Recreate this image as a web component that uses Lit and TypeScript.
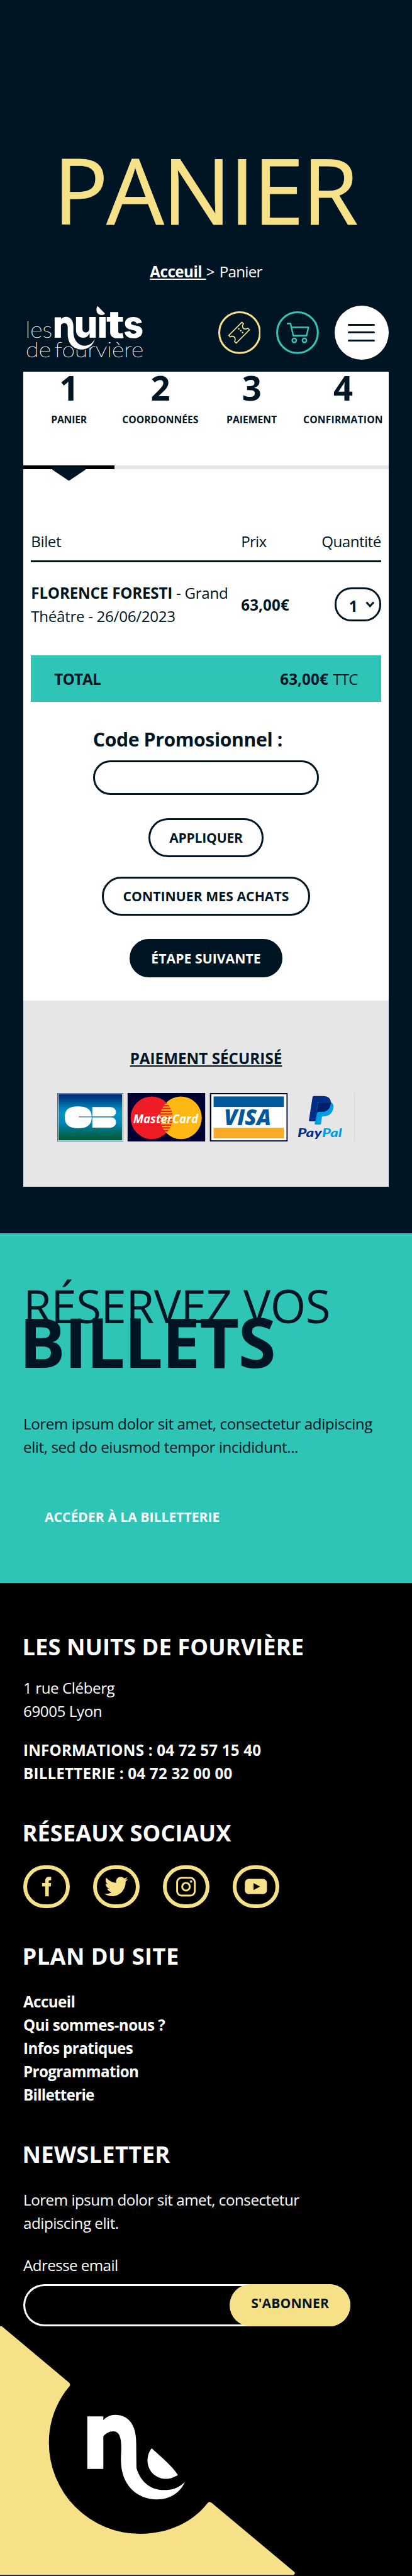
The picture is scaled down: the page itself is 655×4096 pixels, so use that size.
import { LitElement, html, svg, css } from "lit";
import { customElement } from "lit/decorators.js";

const STEPS = [
  { n: "1", label: "PANIER", cls: "s1" },
  { n: "2", label: "COORDONNÉES", cls: "s2" },
  { n: "3", label: "PAIEMENT", cls: "s3" },
  { n: "4", label: "CONFIRMATION", cls: "s4" },
];

const LINKS = [
  { label: "Accueil", cls: "k1" },
  { label: "Qui sommes-nous ?", cls: "k2" },
  { label: "Infos pratiques", cls: "k3" },
  { label: "Programmation", cls: "k4" },
  { label: "Billetterie", cls: "k5" },
];

const SOCIALS = [
  {
    name: "Facebook",
    art: svg`<path d="M45.5 64V43.6H39V36.5H45.5V32.5C45.5 26.500 49 24 53 24H57.700V31H55C53.200 31 52.800 32 52.800 33.500V36.500H57.700L57 43.600H52.800V64Z" fill="#f6e188"/>`,
  },
  {
    name: "Twitter",
    art: svg`<path transform="translate(24 19.200) scale(.094 .096)" fill="#f6e188" d="M459.370 151.716c.325 4.548.325 9.097.325 13.645 0 138.720-105.583 298.558-298.558 298.558-59.452 0-114.680-17.219-161.137-47.106 8.447.974 16.568 1.299 25.340 1.299 49.055 0 94.213-16.568 130.274-44.832-46.132-.975-84.792-31.188-98.112-72.772 6.498.974 12.995 1.624 19.818 1.624 9.421 0 18.843-1.300 27.614-3.573-48.081-9.747-84.143-51.980-84.143-102.985v-1.299c13.969 7.797 30.214 12.670 47.431 13.319-28.264-18.843-46.781-51.005-46.781-87.391 0-19.492 5.197-37.360 14.294-52.954 51.655 63.675 129.300 105.258 216.365 109.807-1.624-7.797-2.599-15.918-2.599-24.040 0-57.828 46.782-104.934 104.934-104.934 30.213 0 57.502 12.670 76.670 33.137 23.715-4.548 46.456-13.320 66.599-25.340-7.798 24.366-24.366 44.833-46.132 57.827 21.117-2.273 41.584-8.122 60.426-16.243-14.292 20.791-32.161 39.308-52.628 54.253z"/>`,
  },
  {
    name: "Instagram",
    art: svg`<g fill="none" stroke="#f6e188"><rect x="29.500" y="26" width="36.500" height="36.500" rx="9" stroke-width="3.800"/><circle cx="47.800" cy="44.200" r="7.800" stroke-width="3.800"/></g><circle cx="58.300" cy="33.500" r="2.500" fill="#f6e188"/>`,
  },
  {
    name: "YouTube",
    art: svg`<rect x="25.200" y="28.200" width="45.500" height="31.500" rx="8" fill="#f6e188"/><path d="M43 37L56.600 44L43 51Z" fill="#000"/>`,
  },
];

const siteLogo = svg`<svg class="logo" viewBox="54 60 756 336" role="img" aria-label="les nuits de fourvière">
  <g fill="#fff">
    <g class="thin">
      <text x="68" y="260" font-size="136" textLength="166" lengthAdjust="spacingAndGlyphs">les</text>
      <text x="70" y="378" font-size="132" textLength="156" lengthAdjust="spacingAndGlyphs">de</text>
      <text x="248" y="378" font-size="132" textLength="550" lengthAdjust="spacingAndGlyphs">fourvière</text>
    </g>
    <path d="M326 255H372C385 320 470 330 496 262C496 300 470 334 413 336C365 336 332 300 326 255Z" fill="#001524"/>
    <path d="M248 132H288V143C296 134 306 129 318 129C345 129 362 150 364 185V225C366 275 395 308 435 308C462 306 483 292 496 266C488 305 455 331 413 331C365 330 330 295 329 240V195C329 180 322 168 309 168C300 168 292 172 287 181V258H248Z"/>
    <path d="M513 62C500 85 506 118 540 118C548 118 556 114 560 110Z"/>
    <g class="fat">
      <text x="367" y="259" font-size="232" textLength="148" lengthAdjust="spacingAndGlyphs">u</text>
      <text x="510" y="259" font-size="232" textLength="67" lengthAdjust="spacingAndGlyphs">ı</text>
      <text x="568" y="259" font-size="232" textLength="112" lengthAdjust="spacingAndGlyphs">t</text>
      <text x="674" y="259" font-size="232" textLength="124" lengthAdjust="spacingAndGlyphs">s</text>
    </g>
  </g>
</svg>`;

const ticketIcon = svg`<svg class="round" viewBox="30 36 264 264">
  <circle cx="162" cy="168" r="126" fill="none" stroke="#f6e188" stroke-width="12"/>
  <path d="M176 104L186 113C175 126 180 146 198 146C206 146 209 140 214 141L223 151L141 233L131 223C140 210 134 191 116 190C110 190 107 194 104 195L95 185Z" fill="none" stroke="#f6e188" stroke-width="6.500"/>
  <g fill="#f6e188"><circle cx="157" cy="145" r="5"/><circle cx="169" cy="156" r="5"/><circle cx="181" cy="167" r="5"/></g>
</svg>`;

const cartIcon = svg`<svg class="round" viewBox="390 36 264 264">
  <g fill="none" stroke="#2ec4b6">
    <circle cx="522" cy="168" r="126" stroke-width="12"/>
    <path d="M460 112H479L496 187H578L590 135H486" stroke-width="9.500" stroke-linecap="round" stroke-linejoin="round"/>
    <circle cx="502" cy="216" r="12.500" stroke-width="9.500"/><circle cx="565" cy="216" r="12.500" stroke-width="9.500"/>
  </g>
</svg>`;

const stripes = Array.from({ length: 11 }, (_, i) => 22 + i * 5.7);

const payments = svg`<svg class="cards" viewBox="0 0 614 100" role="img" aria-label="Moyens de paiement">
  <defs>
    <linearGradient id="cb" x1="0" y1="0" x2="0" y2="1">
      <stop offset="0" stop-color="#00246f"/><stop offset=".3" stop-color="#0080b8"/><stop offset=".42" stop-color="#0091c4"/>
      <stop offset=".62" stop-color="#0088b8"/><stop offset=".8" stop-color="#006e70"/><stop offset="1" stop-color="#005a30"/>
    </linearGradient>
    <clipPath id="lens"><ellipse cx="194.600" cy="51" rx="43.300" ry="44"/></clipPath>
    <clipPath id="lens2"><ellipse cx="255" cy="51" rx="43" ry="44"/></clipPath>
  </defs>
  <rect width="136" height="100" fill="#1d3d78"/><rect x="1" y="1" width="134" height="98" fill="#fff"/>
  <rect x="2.300" y="2.300" width="131.400" height="95.400" fill="url(#cb)"/>
  <path d="M42 27.700C60 27.700 71 33 71 50C71 67 60 72.700 43 72.700C24 72.700 15.500 65 15.500 50C15.500 34 24 27.700 42 27.700Z" fill="#fff"/>
  <path d="M72.300 28.700H108C116 28.700 121 33 121 39C121 45 117 48.500 110 48.500H72.300ZM72.300 50H110C117 50 121 54 121 60.500C121 67 116 71.300 108 71.300H72.300Z" fill="#fff"/>
  <path d="M44 49.200H118" stroke="#2583a8" stroke-width="1.700"/>

  <rect x="145" width="160" height="100" fill="#000032"/>
  <ellipse cx="255" cy="51" rx="43" ry="44" fill="#fdb813"/>
  <ellipse cx="194.600" cy="51" rx="43.300" ry="44" fill="#ee1c25"/>
  <g clip-path="url(#lens)"><g clip-path="url(#lens2)">
    ${stripes.map((y) => svg`<rect x="205" y=${y} width="40" height="2.800" fill="#fdb813"/>`)}
  </g></g>
  <text class="mc" x="156.500" y="62" font-size="25.500" textLength="134" lengthAdjust="spacingAndGlyphs">MasterCard</text>

  <rect x="314.700" width="160.300" height="100" fill="#000022"/><rect x="317.700" y="2.500" width="155" height="95" fill="#fff"/>
  <rect x="322.400" y="7" width="145" height="21.700" fill="#00599c"/><rect x="322.400" y="71.700" width="145" height="21.700" fill="#fbaa28"/>
  <text class="visa" x="344" y="66.200" font-size="46" textLength="97" lengthAdjust="spacingAndGlyphs">VISA</text>

  <path d="M526.500 8Q527 6 529 6H548C560 6 565 12.500 564.300 22C563 34 555 39 545 39H539Q536 39 535.500 42L532.800 56.500Q532.500 58.300 530.500 58.300H520.500Q518.700 58.300 519 56Z" fill="#002e87"/>
  <path d="M537 19H565.500C569 22 570.300 26 569.500 30.500C567 44 558 48 550 48H548.500Q546 48 545.500 51L543.800 63.500Q543.500 65.300 541.500 65.300H532.500Q530.700 65.300 531 63Z" fill="#009de2"/>
  <path d="M540 19H564.300C564.500 31 557 39 545 39H539Q536 39 535.300 42L537 21.500Q537.300 19 540 19Z" fill="#001f6b"/>
  <path d="M537 20L535.500 42L532.800 56.500L531.500 58.200Z" fill="#002e87"/>
  <text class="pp" x="495.500" y="91.200" font-size="25.500" fill="#002e87" textLength="50" lengthAdjust="spacingAndGlyphs">Pay</text>
  <text class="pp" x="546" y="91.200" font-size="25.500" fill="#009de2" textLength="41" lengthAdjust="spacingAndGlyphs">Pal</text>
  <rect x="613" width="1" height="100" fill="#b9bcc2"/>
</svg>`;

const footerArt = svg`<svg class="art" viewBox="0 500 1568 1068" preserveAspectRatio="none">
  <path fill="#f6e188" d="M0 500Q4 497 10 503L262 741Q270 749 264 758C210 830 186 915 186 1000A346 391 0 0 0 532 1391C640 1391 735 1340 790 1258Q796 1249 806 1259L1120 1555Q1125 1562 1116 1568H0Z"/>
  <path fill="#fff" d="M332 887H393V903C405 888 420 880 438 880C490 880 518 925 518 1000L519 1108C535 1170 575 1203 623 1203C655 1203 678 1195 703 1168C685 1215 645 1243 597 1243C520 1243 460 1180 460 1075C460 1040 462 1040 461 1010C460 970 450 951 431 951C415 951 402 960 393 972V1112H332Z"/>
  <path fill="#fff" d="M577 1024C565 1040 561 1060 561 1078C562 1125 595 1155 632 1155C650 1155 662 1146 677 1139C655 1100 612 1060 577 1024Z"/>
</svg>`;

@customElement("app-root")
export class AppRoot extends LitElement {
  static styles = css`
    :host {
      display: block;
      overflow: hidden;
      background: #000;
    }
    * {
      box-sizing: border-box;
      margin: 0;
      padding: 0;
    }
    .page {
      zoom: 0.77108;
      width: 100%;
      height: 5312px;
      overflow: hidden;
      background: #001524;
      color: #001524;
      font: 400 31.36px/48px "Open Sans", "Noto Sans", sans-serif;
      letter-spacing: -0.018em;
    }
    svg { display: block; }
    b { font-weight: 700; }
    h1, h2, h3 { white-space: nowrap; }

    .hero { padding-top: 291px; text-align: center; color: #fff; }
    .hero h1 {
      padding-right: 4px;
      font-weight: 400;
      font-size: 188px;
      line-height: 200px;
      letter-spacing: -0.0187em;
      color: #f6e188;
      -webkit-text-stroke: 1px #f6e188;
    }
    .crumbs { margin-top: 45px; letter-spacing: -0.03em; word-spacing: 3px; }
    .crumbs a {
      font-weight: 700;
      letter-spacing: -0.0212em;
      word-spacing: 1px;
      text-decoration: underline 2px;
      text-underline-offset: 2px;
      white-space: pre;
    }

    .bar {
      display: flex;
      align-items: center;
      height: 112px;
      margin: 46px 48px 24px;
    }
    .logo { width: 252px; height: 112px; margin-right: auto; overflow: visible; }
    .thin { font-family: Lato, sans-serif; font-weight: 100; letter-spacing: 0; stroke: #fff; stroke-width: 1.4px; }
    .fat { font-family: Inter, sans-serif; font-weight: 800; letter-spacing: 0; }
    .round { width: 88px; height: 88px; margin-right: 32px; }
    .menu {
      display: flex;
      flex-direction: column;
      justify-content: center;
      align-items: center;
      gap: 12px;
      width: 112px;
      height: 112px;
      border-radius: 50%;
      background: #fff;
    }
    .menu i { width: 56px; height: 4px; border-radius: 2px; background: #001524; }

    .panel { margin: 0 48px; background: #fff; }
    .steps {
      display: grid;
      grid-template-columns: repeat(4, 1fr);
      height: 194px;
      padding-top: 3px;
      text-align: center;
      font-weight: 700;
    }
    .num { font-size: 70.56px; line-height: 60px; }
    .label { margin-top: 21px; font-size: 20.4px; line-height: 32px; white-space: nowrap; }
    .s1 { letter-spacing: -0.0105em; }
    .s2 { letter-spacing: -0.0006em; }
    .s3 { letter-spacing: -0.0014em; }
    .s4 { letter-spacing: 0.0108em; }
    .track { position: relative; height: 8px; background: #e6e6e6; }
    .done { width: 25%; height: 8px; background: #000; }
    .caret { position: absolute; left: 60px; top: 2px; width: 69px; height: 29px; }

    .table { margin: 124px 16px 0; }
    .row { display: grid; grid-template-columns: 433px 1fr auto; align-items: center; }
    .head { height: 68px; padding-bottom: 16px; border-bottom: 4px solid #001524; }
    .item { height: 192px; padding: 39px 0 57px; }
    .q { letter-spacing: -0.023em; }
    .prix { letter-spacing: -0.032em; }
    .flo { letter-spacing: -0.0079em; }
    .where { letter-spacing: -0.0135em; white-space: nowrap; }
    .price { font-weight: 700; letter-spacing: 0.0047em; }
    .select {
      display: flex;
      align-items: center;
      justify-content: space-between;
      width: 96px;
      height: 70px;
      padding: 4px 9px 0 26px;
      border: 4px solid #001524;
      border-radius: 34px;
      font-weight: 700;
    }
    .select svg { width: 19px; height: 13px; margin-top: -5px; }
    .total {
      display: flex;
      align-items: center;
      justify-content: space-between;
      height: 96px;
      padding: 0 48px;
      background: #2ec4b6;
    }
    .total span { word-spacing: 2px; }
    .tot { letter-spacing: -0.034em; }
    .ttc { letter-spacing: -0.034em; }

    .form { width: 466px; margin: 53px auto 0; }
    .form h3 { font-size: 39.2px; letter-spacing: -0.0135em; }
    .field {
      height: 72px;
      margin-top: 19px;
      border: 4px solid #001524;
      border-radius: 36px;
    }
    .btn {
      display: flex;
      align-items: center;
      justify-content: center;
      height: 80px;
      padding-bottom: 1px;
      margin: 0 auto;
      border: 4px solid #001524;
      border-radius: 40px;
      font-size: 27.44px;
      font-weight: 700;
      letter-spacing: 0.003em;
      white-space: nowrap;
    }
    .apply { width: 238px; margin-top: 48px; letter-spacing: -0.0108em; }
    .more { width: 430px; margin-top: 40px; }
    .next { width: 314px; margin-top: 48px; background: #001524; color: #fff; }

    .secure {
      height: 384px;
      margin-top: 48px;
      padding-top: 94px;
      background: #e6e6e6;
      text-align: center;
    }
    .secure h3 {
      font-size: 31.36px;
      letter-spacing: 0.0018em;
      text-decoration: underline 2px;
      text-underline-offset: 2px;
    }
    .cards { width: 614px; height: 100px; margin: 48px auto 0; }
    .mc { font: italic 700 25.5px "Open Sans", sans-serif; fill: #fff; letter-spacing: 0; }
    .visa { font: italic 800 46px "Open Sans", sans-serif; fill: #00599c; letter-spacing: 0; }
    .pp { font: italic 900 25.5px Lato, sans-serif; letter-spacing: 0; }

    .book { height: 720px; margin-top: 96px; padding: 101px 48px 0; background: #2ec4b6; }
    .t1 { font-weight: 400; font-size: 94.1px; line-height: 96px; letter-spacing: -0.006em; }
    .t2 { margin: -22px 0 0 -8px; font-size: 141.1px; line-height: 96px; letter-spacing: -0.0121em; }
    .book p { margin-top: 97px; letter-spacing: -0.0175em; white-space: nowrap; }
    .cta { display: block; margin: 96px 0 0 44px; font-size: 27.44px; font-weight: 700; letter-spacing: 0; color: #fff; }

    footer { height: 2048px; padding-top: 100px; background: #000; color: #fff; }
    .cols { padding: 0 48px; }
    footer h2 { font-size: 47px; line-height: 64px; margin: 67.5px 0 0 -2px; letter-spacing: 0.0021em; }
    .cols h2:first-child { margin-top: 0; }
    .addr { margin-top: 28.5px; }
    .tel { margin-top: 32px; font-weight: 700; letter-spacing: 0.0082em; }
    .social { display: flex; gap: 48px; margin-top: 35px; }
    .social a { width: 96px; height: 88px; border: 8px solid #f6e188; border-radius: 44px; }
    .social svg { width: 80px; height: 72px; }
    footer h2.plan { letter-spacing: 0.0122em; }
    footer h2.news { letter-spacing: 0.0093em; }
    .links { margin-top: 37px; list-style: none; font-weight: 700; }
    .k1 { letter-spacing: -0.0244em; }
    .k2 { letter-spacing: -0.0208em; }
    .k3 { letter-spacing: -0.0234em; }
    .k4 { letter-spacing: -0.0249em; }
    .k5 { letter-spacing: -0.0299em; }
    .lead { margin-top: 37px; letter-spacing: -0.0199em; }
    .mail { margin-top: 39px; letter-spacing: -0.0241em; }
    .sub {
      display: flex;
      justify-content: flex-end;
      width: 674px;
      height: 88px;
      margin-top: 15px;
      border-radius: 44px;
      box-shadow: inset 0 0 0 4px #fff;
    }
    .sub span {
      display: flex;
      align-items: center;
      justify-content: center;
      width: 248px;
      padding-bottom: 9px;
      border-radius: 44px;
      background: #f6e188;
      color: #001524;
      font-size: 27.44px;
      font-weight: 700;
      letter-spacing: 0.0046em;
    }
    .art { width: 850px; height: 513px; }
  `;

  render() {
    return html`
      <div class="page">
        <section class="hero">
          <h1>PANIER</h1>
          <div class="crumbs"><a>Acceuil </a>&gt; Panier</div>
        </section>

        <header class="bar">
          ${siteLogo}${ticketIcon}${cartIcon}
          <div class="menu"><i></i><i></i><i></i></div>
        </header>

        <main class="panel">
          <div class="steps">
            ${STEPS.map((s) => html`<div><div class="num">${s.n}</div><div class="label ${s.cls}">${s.label}</div></div>`)}
          </div>
          <div class="track">
            <div class="done"></div>
            <svg class="caret" viewBox="0 0 69 29"><path d="M4 0H65Q69 0 69 4V6L37 27.500Q34.500 30 32 27.500L0 6V4Q0 0 4 0Z" fill="#001524"/></svg>
          </div>

          <div class="table">
            <div class="row head"><span>Bilet</span><span class="prix">Prix</span><span class="q">Quantité</span></div>
            <div class="row item">
              <div class="where"><b class="flo">FLORENCE FORESTI</b> - Grand<br />Théâtre - 26/06/2023</div>
              <span class="price">63,00€</span>
              <div class="select">1<svg viewBox="0 0 19 13"><path d="M2 2L9.500 10L17 2" fill="none" stroke="#001524" stroke-width="4"/></svg></div>
            </div>
            <div class="total">
              <b class="tot">TOTAL</b><span><b class="price">63,00€</b> <span class="ttc">TTC</span></span>
            </div>
          </div>

          <div class="form"><h3>Code Promosionnel :</h3><div class="field"></div></div>
          <div class="btn apply">APPLIQUER</div>
          <div class="btn more">CONTINUER MES ACHATS</div>
          <div class="btn next">ÉTAPE SUIVANTE</div>

          <div class="secure"><h3>PAIEMENT SÉCURISÉ</h3>${payments}</div>
        </main>

        <section class="book">
          <h2 class="t1">RÉSERVEZ VOS</h2>
          <h2 class="t2">BILLETS</h2>
          <p>Lorem ipsum dolor sit amet, consectetur adipiscing<br />elit, sed do eiusmod tempor incididunt...</p>
          <a class="cta">ACCÉDER À LA BILLETTERIE</a>
        </section>

        <footer>
          <div class="cols">
            <h2>LES NUITS DE FOURVIÈRE</h2>
            <div class="addr">1 rue Cléberg<br />69005 Lyon</div>
            <div class="tel">INFORMATIONS : 04 72 57 15 40<br />BILLETTERIE : 04 72 32 00 00</div>
            <h2>RÉSEAUX SOCIAUX</h2>
            <div class="social">
              ${SOCIALS.map((s) => html`<a aria-label=${s.name}><svg viewBox="8 8 80 72">${s.art}</svg></a>`)}
            </div>
            <h2 class="plan">PLAN DU SITE</h2>
            <ul class="links">${LINKS.map((l) => html`<li class=${l.cls}>${l.label}</li>`)}</ul>
            <h2 class="news">NEWSLETTER</h2>
            <div class="lead">Lorem ipsum dolor sit amet, consectetur<br />adipiscing elit.</div>
            <div class="mail">Adresse email</div>
            <div class="sub"><span>S'ABONNER</span></div>
          </div>
          ${footerArt}
        </footer>
      </div>
    `;
  }
}
